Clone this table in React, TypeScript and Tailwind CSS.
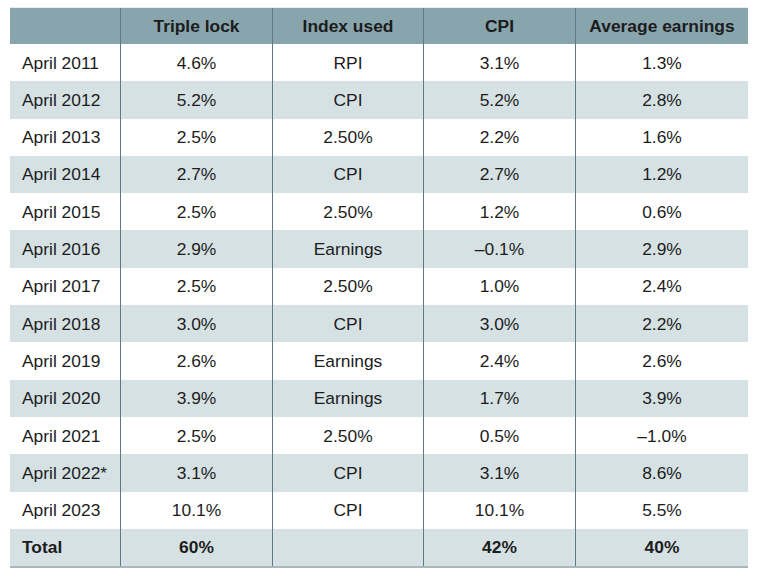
const rows = [
  ['April 2011', '4.6%', 'RPI', '3.1%', '1.3%'],
  ['April 2012', '5.2%', 'CPI', '5.2%', '2.8%'],
  ['April 2013', '2.5%', '2.50%', '2.2%', '1.6%'],
  ['April 2014', '2.7%', 'CPI', '2.7%', '1.2%'],
  ['April 2015', '2.5%', '2.50%', '1.2%', '0.6%'],
  ['April 2016', '2.9%', 'Earnings', '–0.1%', '2.9%'],
  ['April 2017', '2.5%', '2.50%', '1.0%', '2.4%'],
  ['April 2018', '3.0%', 'CPI', '3.0%', '2.2%'],
  ['April 2019', '2.6%', 'Earnings', '2.4%', '2.6%'],
  ['April 2020', '3.9%', 'Earnings', '1.7%', '3.9%'],
  ['April 2021', '2.5%', '2.50%', '0.5%', '–1.0%'],
  ['April 2022*', '3.1%', 'CPI', '3.1%', '8.6%'],
  ['April 2023', '10.1%', 'CPI', '10.1%', '5.5%'],
];

const cols = 'grid grid-cols-[110px_152px_151px_152px_173px]';

export default function App() {
  return (
    <div className="w-[768px] h-[581px] bg-white pt-[7px] pl-[10px] font-['Liberation_Sans',Arial,sans-serif] text-[17.4px] text-[#1c1c1c]">
      <div className="w-[738px] border-t border-[#e6ecee] border-b-2 border-b-[#a9b6bb]">
        {/* Header */}
        <div className={`${cols} h-[36px] bg-[#88a5ae] font-bold`}>
          <div />
          <div className="flex items-center justify-center border-l-[1.5px] border-[#5f7882]">Triple lock</div>
          <div className="flex items-center justify-center border-l-[1.5px] border-[#5f7882]">Index used</div>
          <div className="flex items-center justify-center border-l-[1.5px] border-[#5f7882]">CPI</div>
          <div className="flex items-center justify-center border-l-[1.5px] border-[#5f7882]">Average earnings</div>
        </div>

        {rows.map((r, i) => (
          <div key={r[0]} className={`${cols} h-[37.3px] ${i % 2 === 1 ? 'bg-[#d6e1e4]' : 'bg-white'}`}>
            <div className="flex items-center pl-[12px]">{r[0]}</div>
            {r.slice(1).map((c, j) => (
              <div key={j} className="flex items-center justify-center border-l-[1.5px] border-[#5f7882]">{c}</div>
            ))}
          </div>
        ))}

        {/* Total */}
        <div className={`${cols} h-[37.3px] bg-[#d6e1e4] font-bold`}>
          <div className="flex items-center pl-[12px]">Total</div>
          <div className="flex items-center justify-center border-l-[1.5px] border-[#5f7882]">60%</div>
          <div className="flex items-center justify-center border-l-[1.5px] border-[#5f7882]"></div>
          <div className="flex items-center justify-center border-l-[1.5px] border-[#5f7882]">42%</div>
          <div className="flex items-center justify-center border-l-[1.5px] border-[#5f7882]">40%</div>
        </div>
      </div>
    </div>
  );
}
